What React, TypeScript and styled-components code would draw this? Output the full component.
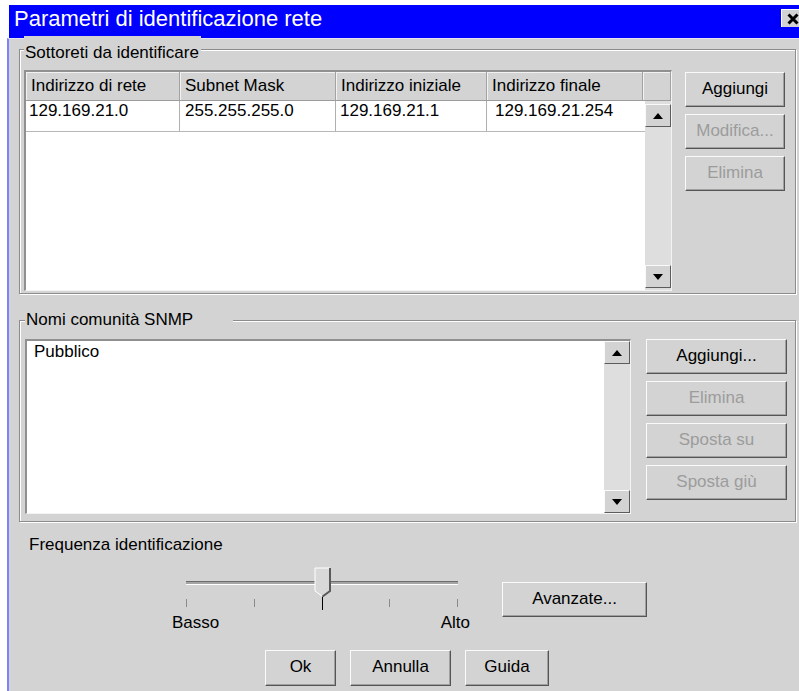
import React from 'react';
import styled, { createGlobalStyle } from 'styled-components';

const FACE = '#d3d3d3';

const GlobalStyle = createGlobalStyle`
  * { box-sizing: border-box; }
  html, body { margin: 0; padding: 0; background: #fff; overflow: hidden; }
  body {
    font-family: "Liberation Sans", Arial, Helvetica, sans-serif;
    font-size: 17px;
    color: #000;
  }
`;

const Window = styled.div`
  display: flex;
  flex-direction: column;
  width: 796px;
  height: 686px;
  margin: 5px 0 0 7px;
`;

const TitleBar = styled.div`
  display: flex;
  justify-content: space-between;
  align-items: flex-start;
  height: 33px;
  margin-left: 2px;
  padding: 1px 0 0 5px;
  background: #0000ff;
  color: #fff;
  font-size: 22px;
  line-height: 25px;
  white-space: nowrap;
`;

const CloseButton = styled.div`
  display: flex;
  align-items: center;
  justify-content: center;
  width: 22px;
  height: 18px;
  margin-top: 3px;
  background: ${FACE};
  border-top: 1px solid #fff;
  border-left: 1px solid #fff;
`;

const Body = styled.div`
  flex: 1;
  display: flex;
  flex-direction: column;
  background: ${FACE};
  border-left: 2px solid #8080ff;
  border-top: 1px solid #e4e4f4;
  padding: 1px 7px 0 10px;
`;

const Group = styled.fieldset<{ $space: number; $pad: string }>`
  margin: ${p => p.$space}px 0 0;
  min-width: 0;
  padding: ${p => p.$pad};
  border: 1px solid #8c8c8c;
  box-shadow: inset 1px 1px 0 #fff, 1px 1px 0 #fff;
`;

const Legend = styled.legend<{ $drop?: number; $trail?: number }>`
  padding: ${p => p.$drop ?? 0}px ${p => p.$trail ?? 2}px 0 1px;
  line-height: 18px;
  background: ${FACE};
  white-space: nowrap;
`;

const GroupRow = styled.div`
  display: flex;
  align-items: flex-start;
`;

const ListView = styled.div<{ $w: number; $h: number }>`
  display: flex;
  flex-direction: column;
  flex-shrink: 0;
  width: ${p => p.$w}px;
  height: ${p => p.$h}px;
  background: #fff;
  border-style: solid;
  border-width: 2px 1px 1px 2px;
  border-color: #909090 #f4f4f4 #f4f4f4 #909090;
`;

const HeaderRow = styled.div`
  display: flex;
  height: 29px;
  background: ${FACE};
  border-bottom: 1px solid #9c9c9c;
`;

const HeaderCell = styled.div<{ $w?: number }>`
  ${p => (p.$w ? `width: ${p.$w}px;` : 'flex: 1;')}
  flex-shrink: 0;
  padding: 4px 0 0 5px;
  line-height: 20px;
  white-space: nowrap;
  overflow: hidden;
  border-right: 1px solid #a2a2a2;
  box-shadow: inset 1px 1px 0 #f2f2f2;
`;

const ListBody = styled.div`
  flex: 1;
  display: flex;
  min-height: 0;
`;

const Rows = styled.div`
  flex: 1;
  display: flex;
  flex-direction: column;
`;

const Row = styled.div`
  display: flex;
  height: 31px;
  border-bottom: 1px solid #b8b8b8;
`;

const Cell = styled.div<{ $w: number; $indent: number; $rule: boolean }>`
  width: ${p => p.$w}px;
  flex-shrink: 0;
  padding: 1px 0 0 ${p => p.$indent}px;
  line-height: 17px;
  white-space: nowrap;
  border-right: ${p => (p.$rule ? '1px solid #b0b0b0' : 'none')};
`;

const ItemText = styled.div`
  padding: 1px 0 0 7px;
  line-height: 20px;
`;

const ScrollBar = styled.div<{ $top: number }>`
  display: flex;
  flex-direction: column;
  justify-content: space-between;
  width: 26px;
  padding: ${p => p.$top}px 0 ${p => (p.$top ? 2 : 0)}px;
  background: #dedede;
`;

const ArrowButton = styled.div`
  display: flex;
  align-items: center;
  justify-content: center;
  height: 23px;
  background: ${FACE};
  border-style: solid;
  border-width: 1px;
  border-color: #fafafa #5c5c5c #5c5c5c #fafafa;
`;

const ButtonColumn = styled.div<{ $gap: number; $lead: number }>`
  display: flex;
  flex-direction: column;
  gap: ${p => p.$gap}px;
  margin: ${p => p.$lead}px 0 0 ${p => (p.$lead ? 13 : 15)}px;
`;

const Button = styled.button<{ $w: number; $h?: number }>`
  width: ${p => p.$w}px;
  height: ${p => p.$h ?? 35}px;
  padding: 0 0 2px;
  background: ${FACE};
  border-style: solid;
  border-width: 1px;
  border-color: #fafafa #555 #555 #fafafa;
  box-shadow: inset -1px -1px 0 #a0a0a0;
  font-family: inherit;
  font-size: 17px;
  line-height: 20px;
  color: #000;
  white-space: nowrap;
  cursor: default;

  &:disabled {
    color: #9c9c9c;
  }
`;

const FieldLabel = styled.div`
  margin-top: 13px;
  padding-left: 10px;
  line-height: 20px;
`;

const SliderRow = styled.div`
  display: flex;
  align-items: flex-start;
  margin-top: 12px;
  padding-left: 167px;
`;

const Slider = styled.div`
  display: flex;
  flex-direction: column;
  width: 272px;
`;

const Rail = styled.div`
  position: relative;
  height: 29px;
  padding-top: 14px;
`;

const Track = styled.div`
  height: 4px;
  background: #a4a4a4;
  border-top: 1px solid #6c6c6c;
  border-bottom: 1px solid #fff;
`;

const Thumb = styled.svg`
  position: absolute;
  top: 0;
  left: calc(50% - 8px);
`;

const Ticks = styled.div`
  display: flex;
  justify-content: space-between;
  align-items: center;
  height: 14px;
`;

const Tick = styled.span<{ $major?: boolean }>`
  width: 1px;
  height: ${p => (p.$major ? 14 : 8)}px;
  background: ${p => (p.$major ? '#000' : '#8a8a8a')};
`;

const SliderLabels = styled.div`
  display: flex;
  justify-content: space-between;
  margin: 3px -12px 0 -14px;
  line-height: 20px;
`;

const SideButton = styled.div`
  margin: 15px 0 0 44px;
`;

const Footer = styled.div`
  display: flex;
  gap: 14px;
  margin-top: 17px;
  padding-left: 246px;
`;

const columns = [
  { title: 'Indirizzo di rete', w: 154, indent: 3 },
  { title: 'Subnet Mask', w: 156, indent: 5 },
  { title: 'Indirizzo iniziale', w: 151, indent: 4 },
  { title: 'Indirizzo finale', w: 156, indent: 8 },
];

const subnets = [['129.169.21.0', '255.255.255.0', '129.169.21.1', '129.169.21.254']];

const Arrow = ({ up }: { up?: boolean }) => (
  <svg width="10" height="6" viewBox="0 0 10 6">
    <polygon points={up ? '0,6 10,6 5,0' : '0,0 10,0 5,6'} fill="#000" />
  </svg>
);

const Scroller = ({ top }: { top: number }) => (
  <ScrollBar $top={top}>
    <ArrowButton>
      <Arrow up />
    </ArrowButton>
    <ArrowButton>
      <Arrow />
    </ArrowButton>
  </ScrollBar>
);

const App = () => {
  return (
    <>
      <GlobalStyle />
      <Window>
        <TitleBar>
          <span>Parametri di identificazione rete</span>
          <CloseButton>
            <svg width="12" height="12" viewBox="0 0 12 12">
              <path d="M1.5 1.5L10.5 10.5M10.5 1.5L1.5 10.5" stroke="#000" strokeWidth="3" />
            </svg>
          </CloseButton>
        </TitleBar>
        <Body>
          <Group $space={-4} $pad="8px 9px 2px 4px">
            <Legend $drop={8}>Sottoreti da identificare</Legend>
            <GroupRow>
              <ListView $w={648} $h={221}>
                <HeaderRow>
                  {columns.map(c => (
                    <HeaderCell key={c.title} $w={c.w}>
                      {c.title}
                    </HeaderCell>
                  ))}
                  <HeaderCell />
                </HeaderRow>
                <ListBody>
                  <Rows>
                    {subnets.map(r => (
                      <Row key={r[0]}>
                        {r.map((v, i) => (
                          <Cell key={i} $w={columns[i].w} $indent={columns[i].indent} $rule={i < 3}>
                            {v}
                          </Cell>
                        ))}
                      </Row>
                    ))}
                  </Rows>
                  <Scroller top={3} />
                </ListBody>
              </ListView>
              <ButtonColumn $gap={7} $lead={2}>
                <Button $w={100}>Aggiungi</Button>
                <Button $w={100} disabled>
                  Modifica...
                </Button>
                <Button $w={100} disabled>
                  Elimina
                </Button>
              </ButtonColumn>
            </GroupRow>
          </Group>

          <Group $space={17} $pad="10px 8px 7px 5px">
            <Legend $trail={40}>Nomi comunità SNMP</Legend>
            <GroupRow>
              <ListView $w={606} $h={175}>
                <ListBody>
                  <Rows>
                    <ItemText>Pubblico</ItemText>
                  </Rows>
                  <Scroller top={0} />
                </ListBody>
              </ListView>
              <ButtonColumn $gap={7} $lead={0}>
                <Button $w={141}>Aggiungi...</Button>
                <Button $w={141} disabled>
                  Elimina
                </Button>
                <Button $w={141} disabled>
                  Sposta su
                </Button>
                <Button $w={141} disabled>
                  Sposta giù
                </Button>
              </ButtonColumn>
            </GroupRow>
          </Group>

          <FieldLabel>Frequenza identificazione</FieldLabel>
          <SliderRow>
            <Slider>
              <Rail>
                <Track />
                <Thumb width="18" height="30" viewBox="0 0 18 30">
                  <path d="M1 1H16V24L8.5 29.5L1 24Z" fill="#d8d8d8" />
                  <path d="M1 24V1H16" stroke="#fff" fill="none" />
                  <path d="M1 24L8.5 29.5" stroke="#fff" fill="none" />
                  <path d="M16 1V24L8.5 29.5" stroke="#5a5a5a" strokeWidth="2" fill="none" />
                </Thumb>
              </Rail>
              <Ticks>
                <Tick />
                <Tick />
                <Tick $major />
                <Tick />
                <Tick />
              </Ticks>
              <SliderLabels>
                <span>Basso</span>
                <span>Alto</span>
              </SliderLabels>
            </Slider>
            <SideButton>
              <Button $w={145}>Avanzate...</Button>
            </SideButton>
          </SliderRow>

          <Footer>
            <Button $w={71} $h={36}>
              Ok
            </Button>
            <Button $w={101} $h={36}>
              Annulla
            </Button>
            <Button $w={84} $h={36}>
              Guida
            </Button>
          </Footer>
        </Body>
      </Window>
    </>
  );
};

export default App;
